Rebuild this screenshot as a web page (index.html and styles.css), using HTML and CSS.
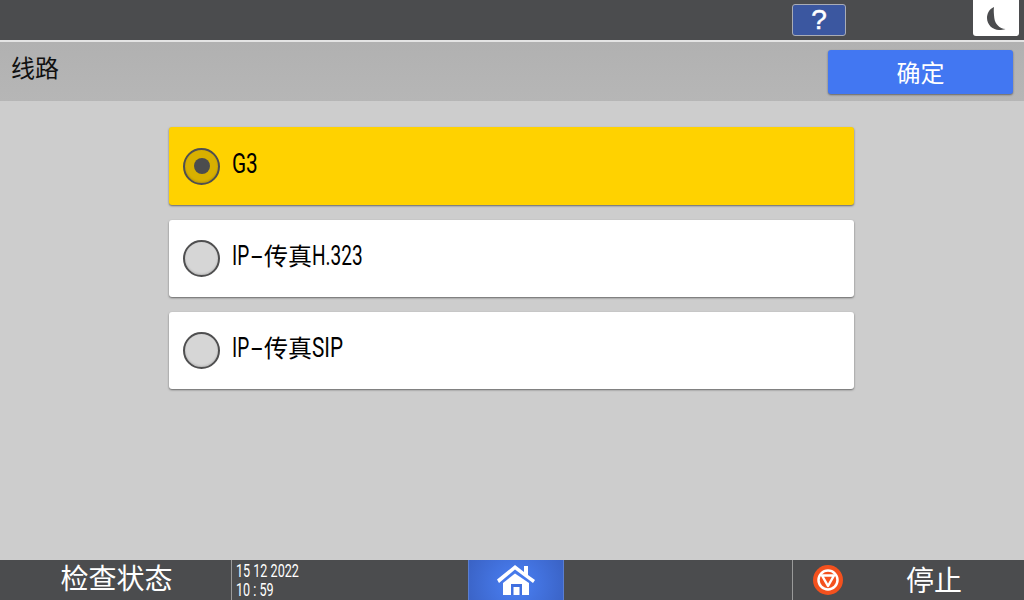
FILE: index.html
```html
<!DOCTYPE html>
<html lang="zh">
<head>
<meta charset="utf-8">
<title>线路</title>
<link rel="stylesheet" href="styles.css">
</head>
<body>
<div class="screen">
  <header class="topbar">
    <button class="help">?</button>
    <button class="night">
      <svg width="22" height="26" viewBox="0 0 22 26"><path class="moon" d="M9 2C4 4 2 9 2 13c0 7 6 12 12 12 2.500 0 4.500-.3 6.500-1C14.500 23.500 10 19 9.300 13 8.900 9 8.500 5 9 2Z"/></svg>
    </button>
  </header>
  <section class="titlebar">
    <h1 class="title">线路</h1>
    <button class="ok">确定</button>
  </section>
  <main class="content">
    <div class="options">
      <div class="option first selected"><span class="radio"><span class="dot"></span></span><span class="label"><span class="cond wide w-g3">G3</span></span></div>
      <div class="option"><span class="radio"></span><span class="label"><span class="cond w-ip">IP</span><span class="dash">-</span>传真<span class="cond w-h323">H.323</span></span></div>
      <div class="option"><span class="radio"></span><span class="label"><span class="cond w-ip">IP</span><span class="dash">-</span>传真<span class="cond wide w-sip">SIP</span></span></div>
    </div>
  </main>
  <footer class="footbar">
    <div class="status">检查状态</div>
    <div class="datetime"><div class="dt-line">15 12 2022</div><div class="dt-line">10 : 59</div></div>
    <button class="home">
      <svg width="40" height="32" viewBox="0 0 40 32"><path class="house" d="M1 15.500 19 1l9 7V2h4v9l7 5-2 3L19 5.500 3 19Z"/><path class="house" d="M7 19 19 9.500 33 19v12H7Z"/><rect class="door" x="15" y="20" width="11" height="11"/><rect class="house" x="17.500" y="23" width="6" height="8"/></svg>
    </button>
    <div class="spacer"></div>
    <div class="stop">
      <svg class="stop-icon" width="30" height="30" viewBox="0 0 30 30"><circle cx="15" cy="15" r="15" fill="#f4511e"/><circle cx="15" cy="15" r="9.500" fill="none" stroke="#fff" stroke-width="2.500"/><path d="M9 10.500h12L15 21Z" fill="none" stroke="#fff" stroke-width="2.500" stroke-linejoin="round"/></svg>
      <span class="stop-text">停止</span>
    </div>
  </footer>
</div>
</body>
</html>
```
FILE: styles.css
```css
* { box-sizing: border-box; margin: 0; padding: 0; }
html, body { width: 1024px; height: 600px; overflow: hidden; }
body { font-family: "Noto Sans CJK SC", sans-serif; background: #cdcdcd; }
button { border: 0; font: inherit; }
.screen { display: flex; flex-direction: column; width: 1024px; height: 600px; }

.topbar { height: 42px; flex: none; background: #4b4c4e; border-bottom: 2px solid #e4e4e4; display: flex; align-items: flex-start; justify-content: flex-end; padding: 0 5px 0 0; }
.help { width: 54px; height: 32px; margin: 4px 127px 0 0; padding-bottom: 2px; background: #3b57a0; border: 1px solid #a9acb5; border-radius: 3px; color: #fff; font-family: "Liberation Sans", sans-serif; font-size: 28px; line-height: 27px; -webkit-text-stroke: .5px #fff; }
.night { width: 46px; height: 36px; background: #fff; border-radius: 0 0 3px 3px; display: flex; align-items: center; justify-content: center; }
.moon { fill: #4b4c4e; }

.titlebar { height: 59px; flex: none; background: linear-gradient(#b1b1b1, #b6b6b6); display: flex; align-items: flex-start; justify-content: space-between; padding: 8px 11px 0 11px; }
.title { font-weight: 400; font-size: 24px; line-height: 34px; color: #111; }
.ok { width: 185px; height: 44px; padding-bottom: 2px; background: #4277f2; border-radius: 3px; color: #fff; font-size: 24px; box-shadow: 0 1px 2px rgba(0,0,0,.45); }

.content { flex: 1; display: flex; justify-content: center; padding: 26px 1px 0 0; }
.options { width: 685px; display: flex; flex-direction: column; gap: 15px; }
.option { height: 77px; background: #fff; border-radius: 3px; display: flex; align-items: center; gap: 12px; padding: 0 0 0 14px; box-shadow: 0 1px 2px rgba(0,0,0,.5); }
.option.first { height: 78px; }
.option.selected { background: #ffd200; }
.radio { width: 37px; height: 37px; border-radius: 50%; background: #d6d6d6; border: 2px solid #4f4f50; display: flex; align-items: center; justify-content: center; box-shadow: inset 0 -1px 2px rgba(0,0,0,.15); }
.selected .radio { background: #d8b000; }
.dot { width: 16px; height: 16px; border-radius: 50%; background: #4b4c4e; }
.label { display: block; margin-top: -6px; font-size: 24px; line-height: 36px; color: #000; white-space: nowrap; }
.cond, .dash { display: inline-block; font-family: Roboto, sans-serif; font-size: 28px; transform-origin: 0 50%; white-space: nowrap; }
.cond { transform: scaleX(.68); }
.cond.wide { transform: scaleX(.74); }
.dash { width: 13px; transform: scaleX(1.5); }
.w-g3 { width: 26px; }
.w-ip { width: 19px; }
.w-h323 { width: 51px; }
.w-sip { width: 31px; }

.footbar { height: 40px; flex: none; background: #4b4c4e; color: #fff; display: flex; align-items: stretch; }
.status { width: 231px; padding-left: 2px; text-align: center; font-size: 28px; line-height: 35px; }
.datetime { width: 237px; border-left: 1px solid #9a9a9a; padding: 1px 0 0 4px; font-family: Roboto, sans-serif; font-size: 18px; line-height: 19px; }
.dt-line { transform: scaleX(.7); transform-origin: 0 50%; white-space: nowrap; }
.home { width: 96px; background: radial-gradient(circle at 50% 60%, #4a80f5, #3a62c4); border-left: 1px solid #5a7ed0; border-right: 1px solid #5a7ed0; display: flex; align-items: flex-start; justify-content: center; padding-top: 4px; }
.house { fill: #fff; }
.door { fill: #3f6fe0; }
.spacer { width: 228px; }
.stop { flex: 1; border-left: 1px solid #9a9a9a; display: flex; align-items: center; padding-left: 20px; gap: 63px; }
.stop-text { font-size: 28px; line-height: 36px; margin-top: -2px; }
```
